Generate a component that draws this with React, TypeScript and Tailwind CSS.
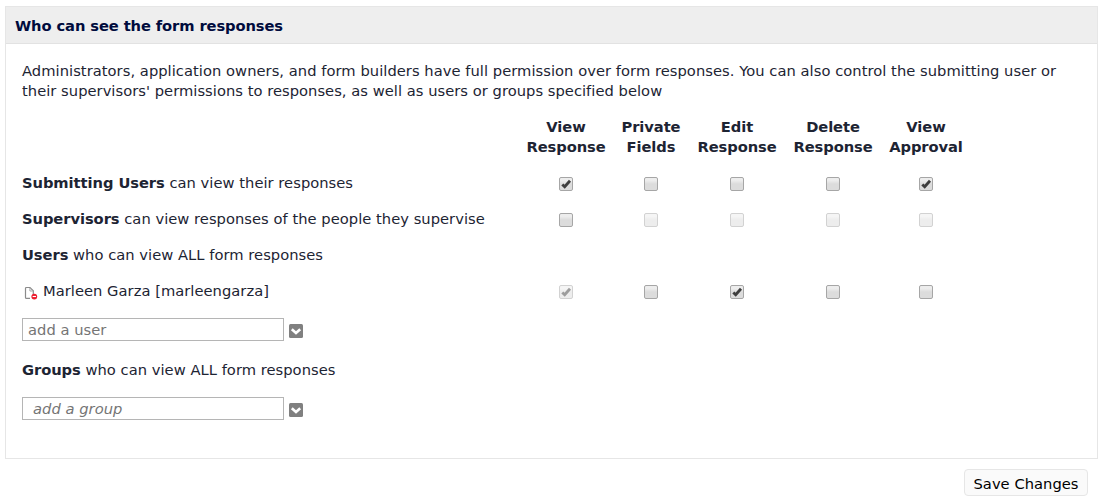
import type { ReactNode } from "react";

type Box = "on" | "off" | "off-disabled" | "on-disabled";

function Check({ state }: { state: Box }) {
  const disabled = state.endsWith("disabled");
  return (
    <span
      role="checkbox"
      aria-checked={state.startsWith("on")}
      className={`mt-[2px] flex h-[14px] w-[14px] justify-center rounded-[2px] border border-[#a6a6a6] bg-linear-to-b from-[#ededed] from-20% to-[#dcdcdc] to-50% ${disabled ? "opacity-50" : ""}`}
    >
      {state.startsWith("on") && (
        <svg width="12" height="12" viewBox="0 0 12 12" fill="none" className="block shrink-0">
          <path d="M2.3 6.4 4.7 8.7 10 2.7" stroke="#3e3e3e" strokeWidth="2.8" />
        </svg>
      )}
    </span>
  );
}

function Bold({ children }: { children: ReactNode }) {
  return <b className="tracking-[-0.06px]">{children}</b>;
}

function Row({ children, boxes = [] }: { children: ReactNode; boxes?: Box[] }) {
  return (
    <div className="grid h-9 grid-cols-[500px_88px_82px_90px_102px_84px] items-center">
      <div className="flex items-center whitespace-pre">{children}</div>
      {boxes.map((b, i) => (
        <div key={i} className="flex justify-center">
          <Check state={b} />
        </div>
      ))}
    </div>
  );
}

function Picker({ placeholder, italic = false }: { placeholder: string; italic?: boolean }) {
  return (
    <div className="flex h-[23px] items-center">
      <div
        className={`flex h-[23px] w-[262px] items-center border border-[#b5b5b5] leading-5 text-[#757575] ${italic ? "pl-[10px] italic" : "pl-[5px]"}`}
      >
        <span>{placeholder}</span>
      </div>
      <svg width="14" height="14" viewBox="0 0 14 14" className="mt-[3px] ml-[5px]">
        <rect width="14" height="14" rx="1.5" fill="#808080" />
        <path d="M2.8 5.2 7 9 11.2 5.2" fill="none" stroke="#fff" strokeWidth="2.6" />
      </svg>
    </div>
  );
}

const heads = [
  ["View", "Response"],
  ["Private", "Fields"],
  ["Edit", "Response"],
  ["Delete", "Response"],
  ["View", "Approval"],
];

export default function App() {
  return (
    <main className="h-[502px] w-[1102px] bg-white pt-[6px] pl-[5px] font-['DejaVu_Sans',sans-serif] text-[14.7px] leading-5 tracking-[0.035px] text-[#1d2433]">
      <section className="h-[453px] w-[1093px] border border-[#e6e6e6]">
        <h2 className="flex h-[37px] items-center border-b border-[#e2e2e2] bg-[#eeeeee] pt-[2px] pl-[9px] font-bold tracking-[-0.1px] text-[#000b3d]">
          <span>Who can see the form responses</span>
        </h2>
        <div className="pt-[17px] pl-4">
          <p className="whitespace-nowrap">
            <span className="tracking-[0.045px]">
              Administrators, application owners, and form builders have full permission over form responses. You can also control the submitting user or
            </span>
            <br />
            <span>their supervisors' permissions to responses, as well as users or groups specified below</span>
          </p>
          <div className="mt-4 mb-2 grid grid-cols-[500px_88px_82px_90px_102px_84px] text-center font-bold tracking-[-0.08px] whitespace-nowrap">
            <div />
            {heads.map(([a, b], i) => (
              <div key={i} className="flex flex-col items-center">
                <span>{a}</span>
                <span>{b}</span>
              </div>
            ))}
          </div>
          <Row boxes={["on", "off", "off", "off", "on"]}>
            <Bold>Submitting Users</Bold>
            <span> can view their responses</span>
          </Row>
          <Row boxes={["off", "off-disabled", "off-disabled", "off-disabled", "off-disabled"]}>
            <Bold>Supervisors</Bold>
            <span> can view responses of the people they supervise</span>
          </Row>
          <Row>
            <Bold>Users</Bold>
            <span> who can view ALL form responses</span>
          </Row>
          <Row boxes={["on-disabled", "off", "on", "off", "off"]}>
            <svg width="16" height="14" viewBox="0 0 16 14" className="mt-[3px] mr-[5px]">
              <path d="M8 12.4H4.5Q3.5 12.4 3.5 11.4V2.6Q3.5 1.5 4.5 1.5H8L11.3 4.8V8" fill="#fff" stroke="#8b8b8b" strokeWidth="1.2" />
              <path d="M7.9 2V5H11" fill="none" stroke="#aaa" />
              <circle cx="12.3" cy="10.6" r="2.9" fill="#ed1c2e" />
              <path d="M10.6 10.5H14" stroke="#fff" strokeWidth="1.1" />
            </svg>
            <span>Marleen Garza [marleengarza]</span>
          </Row>
          <div className="mt-[9px]">
            <Picker placeholder="add a user" />
          </div>
          <div className="mt-[11px] mb-[9px]">
            <Row>
              <Bold>Groups</Bold>
              <span> who can view ALL form responses</span>
            </Row>
          </div>
          <Picker placeholder="add a group" italic />
        </div>
      </section>
      <div className="mt-[10px] flex w-[1083px] justify-end">
        <button className="flex h-[27px] w-[124px] items-center justify-center rounded-[4px] border border-[#e6e6e6] bg-[#fafafa] pt-[2px] whitespace-nowrap text-black">
          <span>Save Changes</span>
        </button>
      </div>
    </main>
  );
}
